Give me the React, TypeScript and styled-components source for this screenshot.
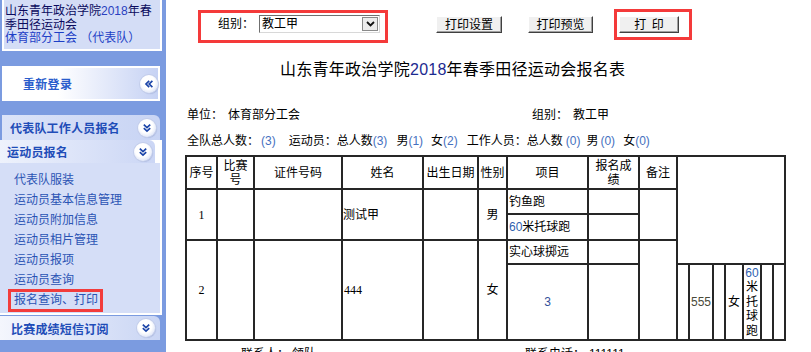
import React from "react";
import styled, { createGlobalStyle, css } from "styled-components";

const FONT = `"Liberation Sans", "Noto Sans CJK SC", sans-serif`;

const GlobalStyle = createGlobalStyle`
  html, body { margin: 0; padding: 0; overflow: hidden; background: #ffffff; }
  body { font-family: ${FONT}; font-size: 12px; color: #000; }
  *, *::before, *::after { box-sizing: border-box; }
`;

const Page = styled.div`
  display: flex;
  width: 811px;
  height: 352px;
`;

/* ---------------- Sidebar ---------------- */

const Sidebar = styled.aside`
  flex: none;
  width: 166px;
  height: 100%;
  background: #7b9be0;
  padding-right: 4px;
  display: flex;
  flex-direction: column;
`;

const SchoolBox = styled.div`
  margin-left: 2px;
  height: 51px;
  border: 2px solid #ffffff;
  border-top: none;
  background: #d4ddf6;
  padding: 5px 0 0 1px;
  line-height: 13.5px;
  color: #0b0b5e;
  white-space: nowrap;
`;

const Year = styled.span`
  color: #2a3fc0;
`;

const Team = styled.span`
  color: #1d3fc6;
`;

const LoginBar = styled.div`
  margin: 15px 2px 0 2px;
  height: 35px;
  border: 2px solid #ffffff;
  background: linear-gradient(to right, #ffffff 0%, #ffffff 35%, #c6d2f4 100%);
  display: flex;
  align-items: center;
  justify-content: space-between;
  padding: 0 0 0 19px;
  font-weight: bold;
  color: #2a5dcc;
  letter-spacing: 0.3px;
`;

const RoundIcon = styled.span`
  flex: none;
  width: 18px;
  height: 18px;
  border-radius: 50%;
  background: radial-gradient(circle at 45% 40%, #ffffff 45%, #e2e8f8 72%, #b9c6ea 100%);
  box-shadow: 0 0 0 1px #c3cdea, 1px 1px 1px rgba(90, 110, 170, 0.35);
  display: flex;
  align-items: center;
  justify-content: center;
`;

const NavHeader = styled.div<{
  $ml: number;
  $w: number;
  $h: number;
  $mt: number;
  $pl: number;
  $pr: number;
  $from: string;
  $to: string;
}>`
  flex: none;
  margin-top: ${(p) => p.$mt}px;
  margin-left: ${(p) => p.$ml}px;
  width: ${(p) => p.$w}px;
  height: ${(p) => p.$h}px;
  padding: 0 ${(p) => p.$pr}px 0 ${(p) => p.$pl}px;
  display: flex;
  align-items: center;
  justify-content: space-between;
  background: linear-gradient(to right, ${(p) => p.$from}, ${(p) => p.$to});
  border-top-right-radius: 6px;
  font-weight: bold;
  color: #1f4db8;
  letter-spacing: 0.2px;
  white-space: nowrap;
`;

const NavSection = styled.div`
  flex: none;
  width: 162px;
  border-right: 2px solid #ffffff;
  border-bottom: 2px solid #ffffff;
  background: #d5def7;
`;

const SectionHeadRow = styled.div`
  background: #ffffff;
  display: flex;
`;

const NavList = styled.ul`
  list-style: none;
  margin: 0;
  padding: 7px 0 1px 0;
`;

const NavItem = styled.li<{ $active?: boolean }>`
  height: 20px;
  line-height: 20px;
  padding-left: 14px;
  color: #2b54b4;
  white-space: nowrap;
  ${(p) =>
    p.$active &&
    css`
      margin: -1px 0 0 8px;
      width: 95px;
      height: 23px;
      line-height: 17px;
      padding-left: 3px;
      border: 3px solid #f23c3c;
    `}
`;

const ChevronsLeft = () => (
  <svg width="10" height="10" viewBox="0 0 10 10">
    <path
      d="M5.2 1.8 L2 5 L5.2 8.2 M8.4 1.8 L5.2 5 L8.4 8.2"
      fill="none"
      stroke="#1a44a8"
      strokeWidth="1.7"
    />
  </svg>
);

const ChevronsDown = () => (
  <svg width="10" height="10" viewBox="0 0 10 10">
    <path
      d="M1.8 1.6 L5 4.6 L8.2 1.6 M1.8 5.2 L5 8.2 L8.2 5.2"
      fill="none"
      stroke="#1a44a8"
      strokeWidth="1.7"
    />
  </svg>
);

/* ---------------- Main ---------------- */

const Main = styled.main`
  flex: 1;
  min-width: 0;
  background: #ffffff;
  padding-top: 9px;
  white-space: nowrap;
`;

const Toolbar = styled.div`
  display: flex;
  align-items: flex-start;
  margin-left: 32px;
`;

const Highlight = styled.div<{ $w: number; $h: number; $mt: number; $ml: number; $pt: number; $pl: number }>`
  flex: none;
  margin: ${(p) => p.$mt}px 0 0 ${(p) => p.$ml}px;
  width: ${(p) => p.$w}px;
  height: ${(p) => p.$h}px;
  border: 3px solid #f43a3a;
  padding: ${(p) => p.$pt}px 0 0 ${(p) => p.$pl}px;
  display: flex;
  align-items: flex-start;
`;

const FieldLabel = styled.span`
  line-height: 18px;
  margin-right: 5px;
`;

const SelectBox = styled.div`
  width: 121px;
  height: 18px;
  border: 1px solid;
  border-color: #6f6f6f #d8d8d8 #d8d8d8 #6f6f6f;
  background: #ffffff;
  display: flex;
  align-items: center;
  justify-content: space-between;
  padding: 0 1px 0 2px;
`;

const SelectValue = styled.span`
  line-height: 14px;
`;

const SelectArrow = styled.span`
  width: 16px;
  height: 14px;
  background: #ececec;
  border: 1px solid #8a8a8a;
  display: flex;
  align-items: center;
  justify-content: center;
`;

const Button = styled.button<{ $w: number; $ml: number; $mt: number }>`
  flex: none;
  margin: ${(p) => p.$mt}px 0 0 ${(p) => p.$ml}px;
  width: ${(p) => p.$w}px;
  height: 17px;
  padding: 0;
  font: inherit;
  font-size: 12px;
  line-height: 14px;
  color: #000;
  background: #f0f0f0;
  border: 1px solid;
  border-color: #ffffff #404040 #404040 #ffffff;
  box-shadow: inset -1px -1px 0 #a0a0a0;
  word-spacing: 2px;
`;

const Title = styled.h1`
  margin: 17px 0 0 114px;
  font-size: 16px;
  line-height: 20px;
  font-weight: normal;
  letter-spacing: 0.25px;
`;

const TitleYear = styled.span`
  color: #1c2a90;
`;

const InfoRow = styled.div`
  margin-top: 27px;
  padding-left: 21px;
  display: grid;
  grid-template-columns: 345px auto;
  line-height: 16px;
`;

const InfoLabel = styled.span`
  margin-right: 5px;
`;

const CountRow = styled.div`
  margin-top: 10px;
  padding-left: 21px;
  line-height: 16px;
`;

const Spaced = styled.span<{ $gap: number }>`
  margin-left: ${(p) => p.$gap}px;
`;

const Count = styled(Spaced)`
  color: #4570c0;
  font-size: 12px;
`;

/* ---------------- Table ---------------- */

const Sheet = styled.div`
  display: grid;
  grid-template-columns: 29px 35px 86px 79px 53px 27px 79px 49px 36px 10px 22px 10px 16px 16px 10px 10px;
  grid-template-rows: 31px 23px 24px 22px 74px;
  gap: 2px;
  padding: 2px;
  background: #262626;
  width: max-content;
  margin: 6px 0 0 19px;
`;

type Align = "left" | "center";

const CellBox = styled.div<{ $c: string; $r: string; $align: Align; $pl: number }>`
  grid-column: ${(p) => p.$c};
  grid-row: ${(p) => p.$r};
  background: #ffffff;
  display: flex;
  align-items: center;
  justify-content: ${(p) => (p.$align === "left" ? "flex-start" : "center")};
  text-align: ${(p) => p.$align};
  padding-left: ${(p) => p.$pl}px;
  overflow: hidden;
`;

const CellText = styled.span<{ $serif?: boolean; $color?: string; $lh?: number }>`
  display: block;
  line-height: ${(p) => p.$lh ?? 14}px;
  white-space: normal;
  color: ${(p) => p.$color ?? "#000"};
  ${(p) =>
    p.$serif &&
    css`
      font-family: "Liberation Serif", "Noto Sans CJK SC", serif;
    `}
`;

const Cell = ({
  c,
  r,
  align = "center",
  pl = 0,
  serif,
  color,
  lh,
  children,
}: {
  c: string;
  r: string;
  align?: Align;
  pl?: number;
  serif?: boolean;
  color?: string;
  lh?: number;
  children?: React.ReactNode;
}) => (
  <CellBox $c={c} $r={r} $align={align} $pl={pl}>
    {children !== undefined && (
      <CellText $serif={serif} $color={color} $lh={lh}>
        {children}
      </CellText>
    )}
  </CellBox>
);

const Footer = styled.div`
  margin-top: 5px;
  padding-left: 75px;
  display: grid;
  grid-template-columns: 284px auto;
  line-height: 16px;
`;

const FooterLabel = styled.span<{ $gap: number }>`
  margin-right: ${(p) => p.$gap}px;
`;

export default function App() {
  return (
    <>
      <GlobalStyle />
      <Page>
        <Sidebar>
          <SchoolBox>
            山东青年政治学院<Year>2018</Year>年春
            <br />
            季田径运动会
            <br />
            <Team>体育部分工会 （代表队）</Team>
          </SchoolBox>

          <LoginBar>
            <span>重新登录</span>
            <RoundIcon>
              <ChevronsLeft />
            </RoundIcon>
          </LoginBar>

          <NavHeader $mt={14} $ml={2} $w={158} $h={25} $pl={8} $pr={4} $from="#dbe3f8" $to="#c8d4f4">
            代表队工作人员报名
            <RoundIcon>
              <ChevronsDown />
            </RoundIcon>
          </NavHeader>

          <NavSection>
            <SectionHeadRow>
              <NavHeader $mt={0} $ml={0} $w={155} $h={23} $pl={7} $pr={3} $from="#eef2fc" $to="#cbd6f5">
                运动员报名
                <RoundIcon>
                  <ChevronsDown />
                </RoundIcon>
              </NavHeader>
            </SectionHeadRow>
            <NavList>
              <NavItem>代表队服装</NavItem>
              <NavItem>运动员基本信息管理</NavItem>
              <NavItem>运动员附加信息</NavItem>
              <NavItem>运动员相片管理</NavItem>
              <NavItem>运动员报项</NavItem>
              <NavItem>运动员查询</NavItem>
              <NavItem $active>报名查询、打印</NavItem>
            </NavList>
          </NavSection>

          <NavHeader $mt={1} $ml={0} $w={160} $h={24} $pl={11} $pr={5} $from="#f4f6fd" $to="#c9d5f4">
            比赛成绩短信订阅
            <RoundIcon>
              <ChevronsDown />
            </RoundIcon>
          </NavHeader>
        </Sidebar>

        <Main>
          <Toolbar>
            <Highlight $w={190} $h={33} $mt={1} $ml={0} $pt={2} $pl={17}>
              <FieldLabel>组别：</FieldLabel>
              <SelectBox>
                <SelectValue>教工甲</SelectValue>
                <SelectArrow>
                  <svg width="9" height="6" viewBox="0 0 9 6">
                    <path d="M1 1 L4.5 4.5 L8 1" fill="none" stroke="#111" strokeWidth="1.8" />
                  </svg>
                </SelectArrow>
              </SelectBox>
            </Highlight>
            <Button $w={66} $ml={48} $mt={7}>打印设置</Button>
            <Button $w={65} $ml={26} $mt={7}>打印预览</Button>
            <Highlight $w={78} $h={31} $mt={0} $ml={21} $pt={4} $pl={2}>
              <Button $w={60} $ml={0} $mt={0}>打 印</Button>
            </Highlight>
          </Toolbar>

          <Title>
            山东青年政治学院<TitleYear>2018</TitleYear>年春季田径运动会报名表
          </Title>

          <InfoRow>
            <span>
              <InfoLabel>单位：</InfoLabel>体育部分工会
            </span>
            <span>
              <InfoLabel>组别：</InfoLabel>教工甲
            </span>
          </InfoRow>

          <CountRow>
            <span>全队总人数：</span>
            <Count $gap={2}>(3)</Count>
            <Spaced $gap={13}>运动员：总人数</Spaced>
            <Count $gap={0}>(3)</Count>
            <Spaced $gap={9}>男</Spaced>
            <Count $gap={0}>(1)</Count>
            <Spaced $gap={8}>女</Spaced>
            <Count $gap={0}>(2)</Count>
            <Spaced $gap={9}>工作人员：总人数</Spaced>
            <Count $gap={3}>(0)</Count>
            <Spaced $gap={6}>男</Spaced>
            <Count $gap={2}>(0)</Count>
            <Spaced $gap={8}>女</Spaced>
            <Count $gap={0}>(0)</Count>
          </CountRow>

          <Sheet>
            <Cell c="1" r="1">序号</Cell>
            <Cell c="2" r="1">
              比赛
              <br />号
            </Cell>
            <Cell c="3" r="1">证件号码</Cell>
            <Cell c="4" r="1">姓名</Cell>
            <Cell c="5" r="1">出生日期</Cell>
            <Cell c="6" r="1">性别</Cell>
            <Cell c="7" r="1">项目</Cell>
            <Cell c="8" r="1">
              报名成
              <br />绩
            </Cell>
            <Cell c="9" r="1">备注</Cell>
            <Cell c="10 / 17" r="1 / 5" />

            <Cell c="1" r="2 / 4" serif>1</Cell>
            <Cell c="2" r="2 / 4" />
            <Cell c="3" r="2 / 4" />
            <Cell c="4" r="2 / 4" align="left">测试甲</Cell>
            <Cell c="5" r="2 / 4" />
            <Cell c="6" r="2 / 4">男</Cell>
            <Cell c="7" r="2" align="left" pl={1}>钓鱼跑</Cell>
            <Cell c="7" r="3" align="left" pl={1}>
              <span style={{ color: "#2f5fb0" }}>60</span>米托球跑
            </Cell>
            <Cell c="8" r="2" />
            <Cell c="8" r="3" />
            <Cell c="9" r="2 / 4" />

            <Cell c="1" r="4 / 6" serif>2</Cell>
            <Cell c="2" r="4 / 6" />
            <Cell c="3" r="4 / 6" />
            <Cell c="4" r="4 / 6" align="left" pl={1} serif>444</Cell>
            <Cell c="5" r="4 / 6" />
            <Cell c="6" r="4 / 6">女</Cell>
            <Cell c="7" r="4" align="left" pl={1}>实心球掷远</Cell>
            <Cell c="7" r="5" color="#34509a">3</Cell>
            <Cell c="8" r="4" />
            <Cell c="8" r="5" />
            <Cell c="9" r="4 / 6" />

            <Cell c="10" r="5" />
            <Cell c="11" r="5" color="#4a4a3a">555</Cell>
            <Cell c="12" r="5" />
            <Cell c="13" r="5">女</Cell>
            <Cell c="14" r="5" lh={14.5}>
              <span style={{ color: "#2f5fb0" }}>60</span>米托球跑
            </Cell>
            <Cell c="15" r="5" />
            <Cell c="16" r="5" />
          </Sheet>

          <Footer>
            <span>
              <FooterLabel $gap={3}>联系人：</FooterLabel>领队
            </span>
            <span>
              <FooterLabel $gap={4}>联系电话：</FooterLabel>111111
            </span>
          </Footer>
        </Main>
      </Page>
    </>
  );
}
